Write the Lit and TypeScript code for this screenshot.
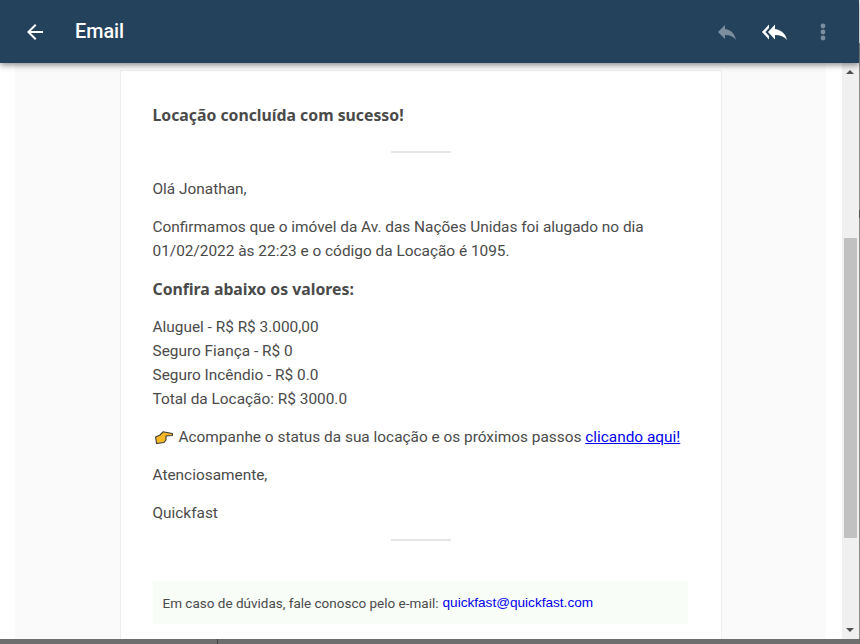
import { LitElement, html, css } from "lit";
import { customElement } from "lit/decorators.js";

@customElement("app-root")
export class AppRoot extends LitElement {
  static styles = css`
    :host { display: block; width: 860px; height: 644px; overflow: hidden; background: #fff; font-family: Roboto, sans-serif; position: relative; }
    .frame { display: flex; flex-direction: column; height: 639px; width: 859px; }
    .bar { height: 63px; flex: none; background: #24425c; display: flex; align-items: center; box-shadow: 0 2px 6px rgba(0,0,0,.45); position: relative; z-index: 2; color: #fff; }
    .back { margin-left: 23px; width: 24px; height: 24px; display: block; }
    .title { margin-left: 28px; font: 500 19.8px Roboto, sans-serif; }
    .actions { margin-left: auto; display: flex; align-items: center; }
    .actions svg { display: block; }
    .reply { width: 24px; height: 24px; margin-right: 22px; opacity: .4; }
    .replyall { width: 30px; height: 24px; margin-right: 20px; }
    .dots { width: 24px; height: 24px; margin-right: 24px; opacity: .4; }
    .body { flex: 1; min-height: 0; display: flex; overflow: hidden; }
    .page { width: 842px; padding: 0 16px 0 15px; box-sizing: border-box; flex: none; }
    .bg { background: #fafafa; height: 100%; padding: 7px 105px 0; box-sizing: border-box; overflow: hidden; }
    .card { background: #fff; border: 1px solid #eceeee; border-bottom: none; padding: 24px 31px 0 31.5px; width: 602px; box-sizing: border-box; height: 600px; color: #4a4a4a; font-size: 15.4px; line-height: 24px; }
    h1, .sub { font-family: "Noto Sans", sans-serif; font-size: 15.8px; font-weight: 700; line-height: 24px; }
    h1 { margin: 8px 0 0; }
    hr { border: 0; height: 2px; background: #e6e6e6; width: 60px; margin: 0 auto; }
    .h1rule { margin-top: 24px; }
    p { margin: 14px 0 0; }
    .first { margin-top: 24px; }
    .footrule { margin-top: 14px; }
    a { color: #0000ee; }
    .hand { width: 18px; height: 13px; vertical-align: -2px; margin: 0 6px 0 2px; }
    .note { margin: 41px 2px 0 0; background: #f9fdf8; height: 42px; display: flex; align-items: center; padding: 0 10px; font-size: 13.5px; }
    .note a { text-decoration: none; color: #0000ee; margin-left: 4px; font-family: "Liberation Sans", sans-serif; font-size: 13.6px; }
    .track { width: 17px; flex: none; background: #f0f0f0; position: relative; }
    .thumb { position: absolute; left: 2px; width: 13px; top: 175px; height: 300px; background: #c1c1c1; }
    .up { position: absolute; left: 4px; top: 7px; width: 0; height: 0; border: 4px solid transparent; border-top: 0; border-bottom: 4px solid #505050; }
    .down { position: absolute; left: 4px; bottom: 7px; width: 0; height: 0; border: 4px solid transparent; border-bottom: 0; border-top: 4px solid #505050; }
    .foot { position: absolute; left: 0; right: 0; bottom: 0; height: 5px; background: #6e6e6e; }
    .tick { position: absolute; left: 217px; bottom: 0; width: 1px; height: 5px; background: #444; }
    .edge { position: absolute; right: 0; top: 43px; bottom: 5px; width: 1px; background: #8c8c8c; }
    .edgemark { position: absolute; right: 0; top: 210px; height: 8px; width: 1px; background: #555; }
  `;
  render() {
    return html`
      <div class="frame">
        <div class="bar">
          <svg class="back" viewBox="0 0 24 24" fill="#fff"><path d="M20 11H7.83l5.59-5.59L12 4l-8 8 8 8 1.41-1.41L7.83 13H20v-2z"/></svg>
          <span class="title">Email</span>
          <div class="actions">
            <svg class="reply" viewBox="0 0 24 24" fill="#fff"><path d="M10 9V5l-7 7 7 7v-4.1c5 0 8.5 1.6 11 5.1-1-5-4-10-11-11z"/></svg>
            <svg class="replyall" viewBox="0 0 30 24" fill="#fff"><path d="M8 8V4.5L1 12l7 7.5V16l-3.6-4L8 8zm6 1V4.5L7 12l7 7.5v-4.6c5 0 9.5 1.6 12 5.1-1-5-5-10-12-11z"/></svg>
            <svg class="dots" viewBox="0 0 24 24" fill="#fff"><circle cx="12" cy="6" r="2.4"/><circle cx="12" cy="12" r="2.4"/><circle cx="12" cy="18" r="2.4"/></svg>
          </div>
        </div>
        <div class="body">
          <div class="page"><div class="bg"><div class="card">
            <h1>Locação concluída com sucesso!</h1>
            <hr class="h1rule" />
            <p class="first">Olá Jonathan,</p>
            <p>Confirmamos que o imóvel da Av. das Nações Unidas foi alugado no dia<br />01/02/2022 às 22:23 e o código da Locação é 1095.</p>
            <p class="sub">Confira abaixo os valores:</p>
            <p>Aluguel - R$ R$ 3.000,00<br />Seguro Fiança - R$ 0<br />Seguro Incêndio - R$ 0.0<br />Total da Locação: R$ 3000.0</p>
            <p><svg class="hand" viewBox="0 0 18 13"><path d="M.6 6L5 4l3-3.2 4 .7 5 1q1.2 1 0 2l-6 .5v4L9 11.5l-7.5 1z" fill="#f6b824" stroke="#3a3a3a" stroke-width="1.1" stroke-linejoin="round"/></svg>Acompanhe o status da sua locação e os próximos passos <a href="#">clicando aqui!</a></p>
            <p>Atenciosamente,</p>
            <p>Quickfast</p>
            <hr class="footrule" />
            <div class="note">Em caso de dúvidas, fale conosco pelo e-mail: <a href="#">quickfast@quickfast.com</a></div>
          </div></div></div>
          <div class="track"><div class="up"></div><div class="thumb"></div><div class="down"></div></div>
        </div>
      </div>
      <div class="foot"><div class="tick"></div></div>
      <div class="edge"></div>
      <div class="edgemark"></div>
    `;
  }
}
